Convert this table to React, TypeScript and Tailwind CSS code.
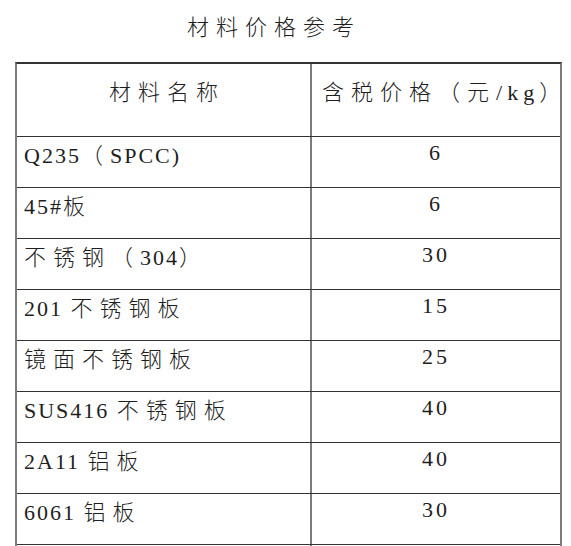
import React from "react";

const CJK_RE = /[\u3000-\u9fff\uff00-\uffef]/;

function Runs({ text, latin }: { text: string; latin: string }) {
  const parts = text.match(/[\u3000-\u9fff\uff00-\uffef]+|[^\u3000-\u9fff\uff00-\uffef]+/g) || [];
  return (
    <>
      {parts.map((p, i) =>
        CJK_RE.test(p) ? (
          <span key={i} className="font-['Noto_Sans_CJK_SC',sans-serif] font-light tracking-[7px]">
            {p}
          </span>
        ) : (
          <span key={i} className={"font-['Liberation_Serif','DejaVu_Serif',serif] " + latin}>
            {p}
          </span>
        )
      )}
    </>
  );
}

const rows: [string, string][] = [
  ["Q235（SPCC)", "6"],
  ["45#板", "6"],
  ["不锈钢（304）", "30"],
  ["201 不锈钢板", "15"],
  ["镜面不锈钢板", "25"],
  ["SUS416 不锈钢板", "40"],
  ["2A11 铝板", "40"],
  ["6061 铝板", "30"],
  ["", ""],
];

export default function App() {
  return (
    <div className="h-[546px] w-[571px] overflow-hidden bg-white text-[#1e1e1e] font-['Liberation_Serif','Noto_Sans_CJK_SC',serif]">
      <div className="pt-[14px] pl-[187px] h-[62px] text-[22px] leading-[22px] whitespace-nowrap">
        <Runs text="材料价格参考" latin="" />
      </div>
      <div className="ml-[15px] w-[547px] border-x-2 border-x-[#7c7c7c] border-t-2 border-t-[#333]">
        <div className="flex h-[73px] border-b border-[#333]">
          <div className="w-[295px] shrink-0 border-r-2 border-r-[#7c7c7c] pt-[15px] pl-[7px] text-center text-[22px] leading-[22px] whitespace-nowrap">
            <Runs text="材料名称" latin="" />
          </div>
          <div className="w-[248px] shrink-0 pt-[15px] pl-[10px] text-[22px] leading-[22px] whitespace-nowrap">
            <Runs text="含税价格（元/kg）" latin="tracking-[5px]" />
          </div>
        </div>
        {rows.map(([name, price], i) => (
          <div key={i} className="flex h-[51px] border-b border-[#333]">
            <div className="w-[295px] shrink-0 border-r-2 border-r-[#7c7c7c] pt-[5px] pl-[7px] text-[22px] leading-[22px] whitespace-nowrap">
              <Runs text={name} latin="tracking-[2px]" />
            </div>
            <div className="w-[248px] shrink-0 pt-[5px] text-center text-[22px] leading-[22px] whitespace-nowrap">
              <Runs text={price} latin="tracking-[3px]" />
            </div>
          </div>
        ))}
      </div>
    </div>
  );
}
